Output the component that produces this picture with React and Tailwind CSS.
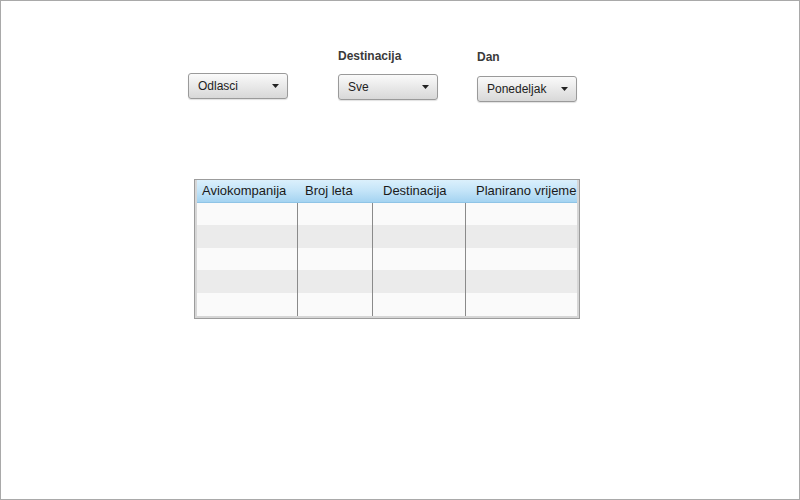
const font = { fontFamily: '"Liberation Sans", Arial, sans-serif' };

function Select({ value }) {
  return (
    <div className="flex items-center justify-between w-[100px] h-[26px] pl-[9px] pr-[8px] border border-[#9a9a9a] rounded-[3px] bg-linear-to-b from-[#fafafa] to-[#d8d8d8] text-[12px] text-[#222] shadow-[0_1px_1px_rgba(0,0,0,0.12)]">
      <span>{value}</span>
      <svg width="7" height="4" viewBox="0 0 7 4">
        <path d="M0 0H7L3.5 4Z" fill="#222" />
      </svg>
    </div>
  );
}

const columns = [
  { title: "Aviokompanija", width: "w-[101px]", pad: "pl-[5px]" },
  { title: "Broj leta", width: "w-[75px]", pad: "pl-[7px]" },
  { title: "Destinacija", width: "w-[93px]", pad: "pl-[10px]" },
  { title: "Planirano vrijeme", width: "w-[111px]", pad: "pl-[10px]" },
];

const rows = ["h-[22px]", "h-[23px]", "h-[22px]", "h-[23px]", "h-[23px]"];

export default function App() {
  return (
    <div
      className="w-[800px] h-[500px] border border-[#a9a9a9] bg-white overflow-hidden"
      style={font}
    >
      <div className="flex items-start pt-[48px] pl-[187px]">
        <div className="mt-[24px]">
          <Select value="Odlasci" />
        </div>
        <div className="ml-[50px]">
          <div className="h-[14px] leading-[14px] text-[12px] font-bold text-[#3a3a3a]">
            Destinacija
          </div>
          <div className="mt-[11px]">
            <Select value="Sve" />
          </div>
        </div>
        <div className="ml-[39px]">
          <div className="h-[14px] leading-[14px] mt-[1px] text-[12px] font-bold text-[#3a3a3a]">
            Dan
          </div>
          <div className="mt-[12px]">
            <Select value="Ponedeljak" />
          </div>
        </div>
      </div>

      <div className="ml-[193px] mt-[77px] w-[386px] border border-[#9c9c9c]">
        <div className="px-[2px] pb-[2px] bg-[#d6d6d6]">
          <div className="flex h-[23px] items-center border-b border-[#8fc4e6] bg-linear-to-b from-[#dbf0fc] via-[#c3e4f8] to-[#a4d3f1]">
            {columns.map((c) => (
              <div
                key={c.title}
                className={`${c.width} ${c.pad} text-[13px] text-[#1a1a1a] whitespace-nowrap overflow-hidden`}
              >
                {c.title}
              </div>
            ))}
          </div>
          {rows.map((h, i) => (
            <div
              key={i}
              className={`flex ${h} ${i % 2 === 0 ? "bg-[#fafafa]" : "bg-[#ebebeb]"}`}
            >
              {columns.map((c, j) => (
                <div
                  key={c.title}
                  className={`${c.width} h-full ${j < 3 ? "border-r border-[#8a8a8a]" : ""}`}
                />
              ))}
            </div>
          ))}
        </div>
      </div>
    </div>
  );
}
